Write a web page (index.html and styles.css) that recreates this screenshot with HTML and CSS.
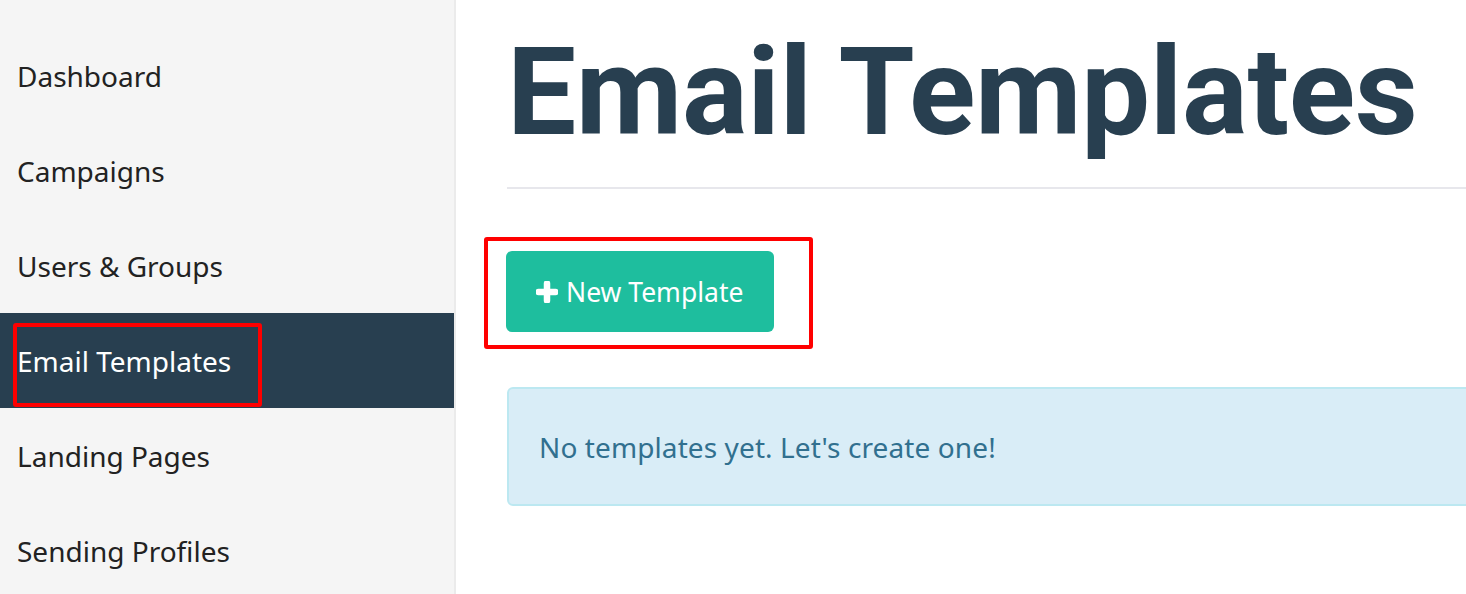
FILE: index.html
```html
<!DOCTYPE html>
<html>
<head>
<meta charset="utf-8">
<link rel="stylesheet" href="styles.css">
</head>
<body>
<div class="layout">
  <nav class="sidebar">
    <ul class="nav">
      <li class="nav-item"><a>Dashboard</a></li>
      <li class="nav-item"><a>Campaigns</a></li>
      <li class="nav-item"><a>Users &amp; Groups</a></li>
      <li class="nav-item active"><a>Email Templates</a><span class="mark mark-nav"></span></li>
      <li class="nav-item"><a>Landing Pages</a></li>
      <li class="nav-item"><a>Sending Profiles</a></li>
    </ul>
  </nav>
  <main class="main">
    <h1 class="title">Email Templates</h1>
    <div class="actions">
      <div class="btn-wrap">
        <button class="btn">
          <svg class="plus" viewBox="0 0 22 22" width="22" height="22"><path d="M11 2.5V19.5M2.5 11H19.5" stroke="#fff" stroke-width="6.5" stroke-linecap="round"/></svg>
          <span>New Template</span>
        </button>
        <span class="mark mark-btn"></span>
      </div>
    </div>
    <div class="alert">No templates yet. Let's create one!</div>
  </main>
</div>
</body>
</html>
```

FILE: styles.css
```css
html, body {
  margin: 0;
  padding: 0;
  background: #ffffff;
  height: 100%;
  overflow: hidden;
}
.layout {
  display: flex;
  height: 594px;
}
.sidebar {
  width: 454px;
  flex: none;
  background: #f5f5f5;
  border-right: 2px solid #ebebeb;
  padding-top: 28px;
  box-sizing: content-box;
}
.nav {
  list-style: none;
  margin: 0;
  padding: 0;
}
.nav-item {
  position: relative;
  height: 95px;
  display: flex;
  align-items: center;
  padding-left: 17px;
  font-family: "Noto Sans", "Open Sans", sans-serif;
  font-size: 28px;
  color: #222;
}
.nav-item.active {
  background: #283f50;
  color: #fff;
}
.mark {
  position: absolute;
  border: 4px solid #ff0000;
  border-radius: 3px;
  box-sizing: border-box;
  pointer-events: none;
}
.mark-nav {
  left: 13px;
  top: 10px;
  width: 249px;
  height: 84px;
}
.main {
  flex: 1;
  padding-left: 51px;
  min-width: 0;
}
.title {
  margin: 0;
  padding-top: 22px;
  font-family: "Roboto", sans-serif;
  font-weight: 700;
  font-size: 123px;
  line-height: 140px;
  color: #283f50;
  letter-spacing: -0.4px;
  border-bottom: 2px solid #e7e7ec;
  padding-bottom: 25px;
}
.actions {
  padding-top: 62px;
}
.btn-wrap {
  position: relative;
  display: inline-block;
}
.btn {
  display: flex;
  align-items: center;
  gap: 8px;
  height: 81px;
  width: 268px;
  margin-left: -1px;
  padding: 0 0 0 30px;
  border: none;
  border-radius: 6px;
  background: #1ebe9e;
  color: #fff;
  font-family: "Noto Sans", "Open Sans", sans-serif;
  font-size: 26.5px;
}
.plus {
  flex: none;
}
.mark-btn {
  left: -23px;
  top: -14px;
  width: 329px;
  height: 112px;
}
.alert {
  margin-top: 55px;
  margin-right: -10px;
  height: 119px;
  box-sizing: border-box;
  background: #d9edf7;
  border: 2px solid #bce8f1;
  border-radius: 6px;
  display: flex;
  align-items: center;
  padding-left: 30px;
  font-family: "Noto Sans", "Open Sans", sans-serif;
  font-size: 28px;
  letter-spacing: 0.1px;
  color: #31708f;
}
```
